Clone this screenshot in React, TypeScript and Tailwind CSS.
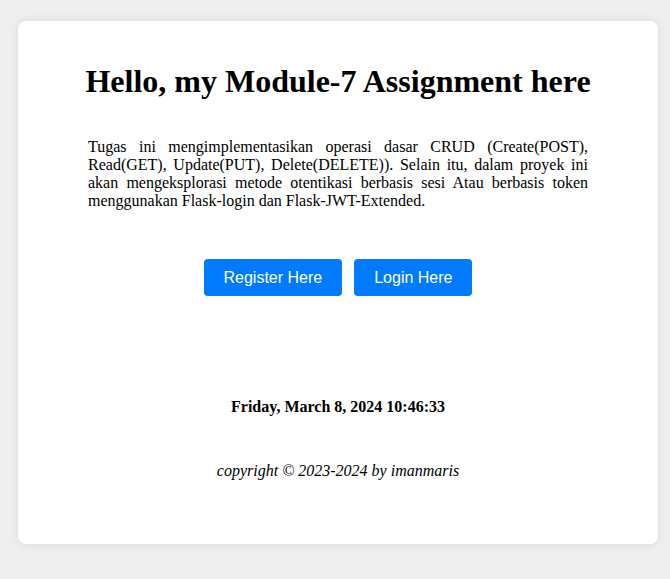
export default function App() {
  return (
    <div className="min-h-screen bg-[#efefef] pl-[18px] pt-[21px] pb-8">
      <div className="w-[640px] h-[523px] bg-white rounded-lg shadow-[0_0_10px_rgba(0,0,0,0.1)] flex flex-col items-center font-['Liberation_Serif',serif] text-black leading-[normal]">
        {/* Title */}
        <h1 className="mt-[42px] text-[32px] font-bold leading-[normal]">Hello, my Module-7 Assignment here</h1>

        {/* Description */}
        <p className="mt-[38px] w-[500px] text-[16px] leading-[normal] text-justify">
          Tugas ini mengimplementasikan operasi dasar CRUD (Create(POST), Read(GET), Update(PUT), Delete(DELETE)).
          Selain itu, dalam proyek ini akan mengeksplorasi metode otentikasi berbasis sesi Atau berbasis token
          menggunakan Flask-login dan Flask-JWT-Extended.
        </p>

        {/* Actions */}
        <div className="mt-[49px] flex gap-3 font-['Liberation_Sans',Arial,sans-serif]">
          <button className="h-[37px] px-5 rounded bg-[#007bff] text-white text-[16px] leading-[normal]">Register Here</button>
          <button className="h-[37px] px-5 rounded bg-[#007bff] text-white text-[16px] leading-[normal]">Login Here</button>
        </div>

        <p className="mt-[102px] text-[16px] leading-[normal] font-bold">Friday, March 8, 2024 10:46:33</p>

        <p className="mt-[46px] text-[16px] leading-[normal] italic">copyright © 2023-2024 by imanmaris</p>
      </div>
    </div>
  )
}
